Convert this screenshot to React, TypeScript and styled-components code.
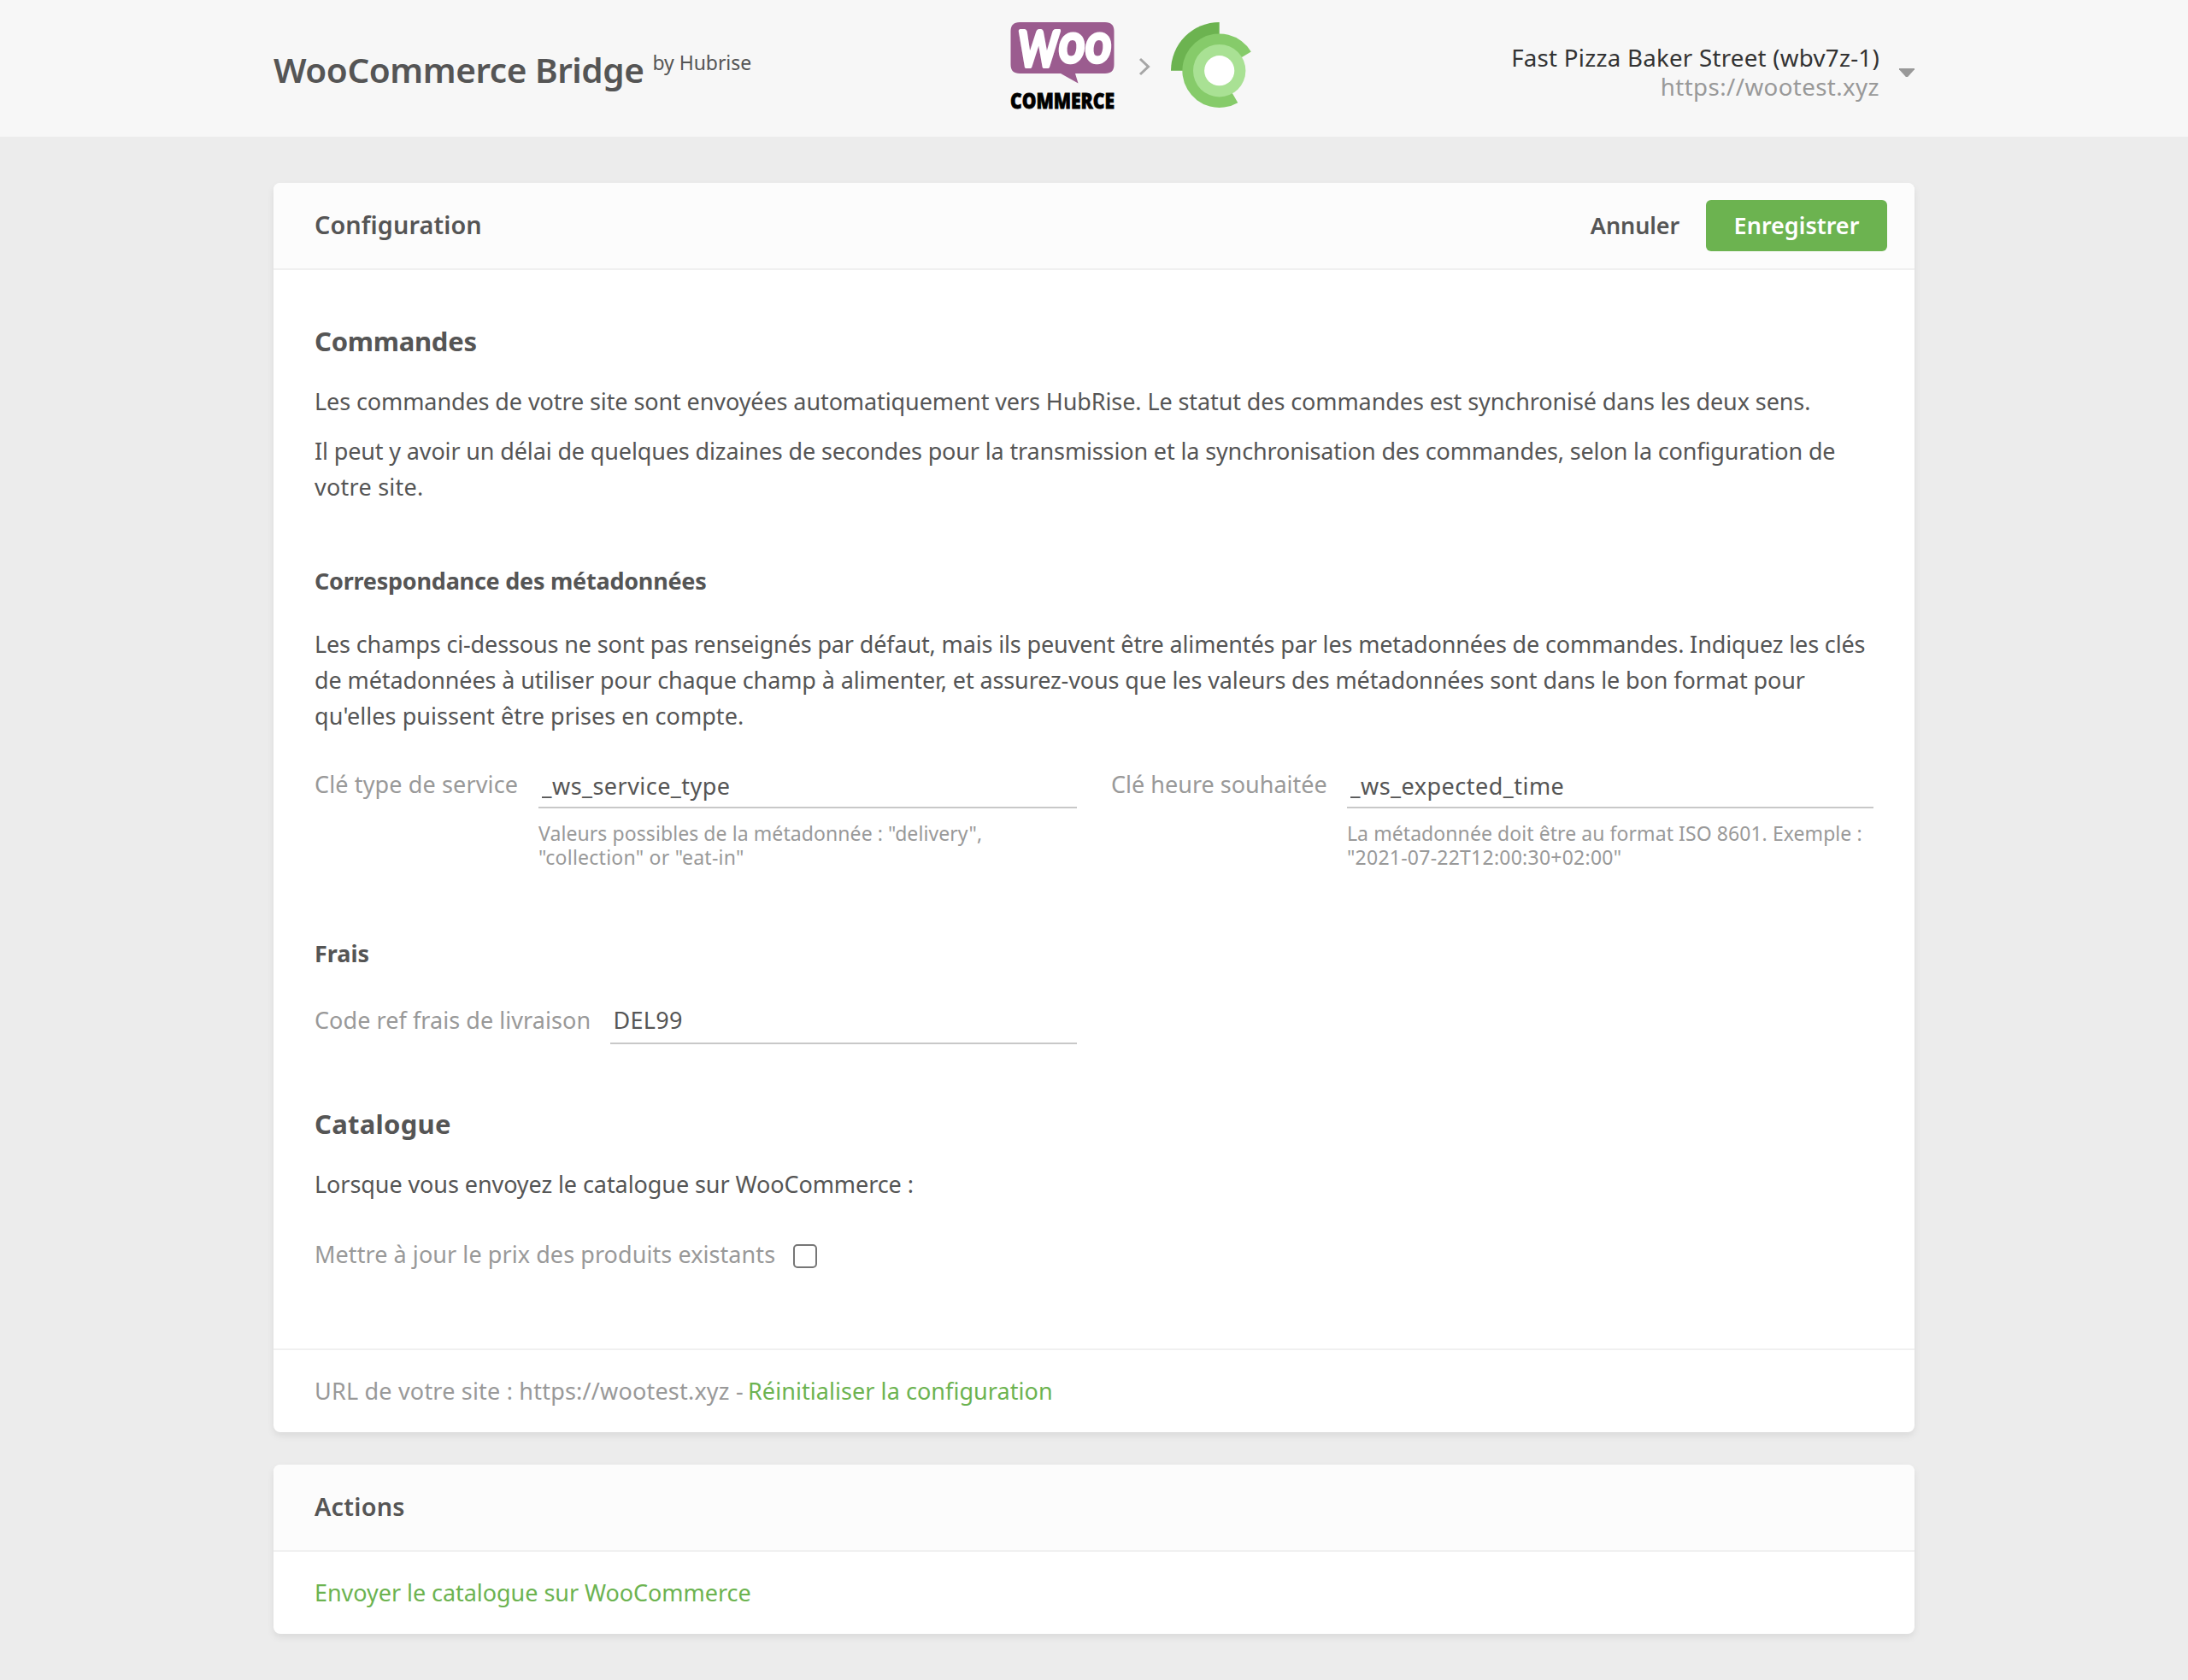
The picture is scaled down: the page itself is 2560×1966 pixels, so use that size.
import React from "react";
import styled, { createGlobalStyle } from "styled-components";

const GlobalStyle = createGlobalStyle`
  *, *::before, *::after { box-sizing: border-box; }
  html, body { margin: 0; padding: 0; }
  body {
    min-height: 1966px;
    background: #ececec;
    color: #555;
    font-family: "Noto Sans", "Open Sans", sans-serif;
    font-size: 27px;
    line-height: 42px;
  }
  h1, h2, h3, p { margin: 0; }
`;

type Tracked = { $track?: number };

const TopBar = styled.header`
  height: 160px;
  background: #f7f7f7;
`;

const TopBarInner = styled.div`
  width: 1920px;
  height: 160px;
  margin: 0 auto;
  display: flex;
  align-items: flex-start;
`;

const Brand = styled.div`
  width: 862px;
  padding-top: 52px;
  display: flex;
  align-items: flex-start;
  gap: 10px;
  white-space: nowrap;
`;

const BrandName = styled.h1<Tracked>`
  font-size: 40.5px;
  line-height: 60px;
  font-weight: 600;
  letter-spacing: ${(p) => p.$track ?? 0}px;
`;

const BrandBy = styled.span<Tracked>`
  padding-top: 6px;
  font-size: 23px;
  line-height: 30px;
  letter-spacing: ${(p) => p.$track ?? 0}px;
`;

const Logos = styled.div`
  padding-top: 26px;
  display: flex;
  align-items: flex-start;
`;

const WooSvg = styled.svg`
  display: block;
  width: 122px;
  height: 103px;
  overflow: visible;
`;

const ChevronSvg = styled.svg`
  display: block;
  width: 14px;
  height: 22px;
  margin: 41px 24px 0 28px;
`;

const HubriseSvg = styled.svg`
  display: block;
  width: 95px;
  height: 101px;
`;

const Account = styled.div`
  margin-left: auto;
  padding-top: 51px;
  display: flex;
  align-items: flex-start;
  gap: 23px;
`;

const AccountText = styled.div`
  text-align: right;
  font-size: 27.7px;
  line-height: 33.5px;
  white-space: nowrap;
`;

const AccountLine = styled.div<Tracked & { $muted?: boolean }>`
  color: ${(p) => (p.$muted ? "#999" : "#333")};
  letter-spacing: ${(p) => p.$track ?? 0}px;
`;

const Caret = styled.span`
  width: 18px;
  height: 10px;
  margin-top: 29px;
  background: #999;
  clip-path: polygon(0 0, 100% 0, 100% 12%, 56% 100%, 44% 100%, 0 12%);
`;

const Main = styled.main`
  width: 1920px;
  margin: 0 auto;
  padding: 54px 0;
  display: flex;
  flex-direction: column;
  gap: 38px;
`;

const Card = styled.section`
  background: #fff;
  border-radius: 8px;
  box-shadow: 0 4px 8px rgba(0, 0, 0, 0.08);
`;

const CardHeader = styled.div`
  height: 102px;
  padding: 0 32px 0 48px;
  display: flex;
  align-items: center;
  background: #fcfcfc;
  border-bottom: 2px solid #f0f0f0;
  border-radius: 8px 8px 0 0;
`;

const CardTitle = styled.h2<Tracked>`
  margin-right: auto;
  padding-bottom: 2px;
  font-size: 28.8px;
  font-weight: 600;
  letter-spacing: ${(p) => p.$track ?? 0}px;
`;

const Button = styled.button<Tracked & { $primary?: boolean }>`
  width: ${(p) => (p.$primary ? 212 : 166)}px;
  height: 60px;
  padding: 0;
  border: 0;
  border-radius: 6px;
  background: ${(p) => (p.$primary ? "#6cb350" : "transparent")};
  color: ${(p) => (p.$primary ? "#fff" : "#555")};
  font-family: inherit;
  font-size: 27px;
  font-weight: 600;
  line-height: 58px;
  letter-spacing: ${(p) => p.$track ?? 0}px;
`;

const CardBody = styled.div`
  padding: 62px 48px 89px;
`;

const SectionTitle = styled.h2<Tracked & { $top?: number }>`
  margin-top: ${(p) => p.$top ?? 0}px;
  font-size: 31px;
  font-weight: 700;
  letter-spacing: ${(p) => p.$track ?? 0}px;
`;

const SubTitle = styled.h3<Tracked & { $top: number }>`
  margin-top: ${(p) => p.$top}px;
  font-size: 27px;
  font-weight: 700;
  letter-spacing: ${(p) => p.$track ?? 0}px;
`;

const Paragraph = styled.p<{ $top: number }>`
  margin-top: ${(p) => p.$top}px;
`;

const Line = styled.span<Tracked>`
  display: block;
  white-space: nowrap;
  letter-spacing: ${(p) => p.$track ?? 0}px;
`;

const FieldRow = styled.div<{ $top: number }>`
  margin-top: ${(p) => p.$top}px;
  display: grid;
  grid-template-columns: 892px 892px;
  column-gap: 40px;
`;

const Field = styled.div<{ $label: number }>`
  display: grid;
  grid-template-columns: ${(p) => p.$label}px 1fr;
`;

const Label = styled.label<Tracked>`
  color: #999;
  white-space: nowrap;
  letter-spacing: ${(p) => p.$track ?? 0}px;
`;

const Input = styled.input<Tracked & { $lift?: number }>`
  display: block;
  width: 100%;
  height: 49px;
  padding: 0 4px ${(p) => 2 + (p.$lift ?? 0)}px 3.5px;
  border: 0;
  border-bottom: 2px solid #c8c8c8;
  border-radius: 0;
  outline: 0;
  background: transparent;
  color: #555;
  font-family: inherit;
  font-size: 27px;
  letter-spacing: ${(p) => p.$track ?? 0}px;
`;

const Help = styled.div`
  margin-top: 15px;
  color: #999;
  font-size: 23px;
  line-height: 28px;
`;

const CheckRow = styled.div`
  margin-top: 40px;
  display: flex;
  align-items: flex-start;
`;

const CheckLabelBox = styled.div`
  width: 560px;
`;

const Checkbox = styled.input.attrs({ type: "checkbox" })`
  appearance: none;
  width: 28px;
  height: 28px;
  margin: 9px 0 0;
  border: 2px solid #767676;
  border-radius: 5px;
  background: #fff;
`;

const CardFooter = styled.div<{ $line?: boolean }>`
  height: ${(p) => (p.$line ? 98 : 96)}px;
  padding: 0 48px;
  display: flex;
  align-items: center;
  border-top: ${(p) => (p.$line ? "2px solid #f0f0f0" : "0")};
  color: #999;
  white-space: nowrap;
`;

const FooterText = styled.span<Tracked>`
  width: 507px;
  letter-spacing: ${(p) => p.$track ?? 0}px;
`;

const Link = styled.a<Tracked>`
  color: #6cb350;
  text-decoration: none;
  letter-spacing: ${(p) => p.$track ?? 0}px;
`;

function WooLogo() {
  return (
    <WooSvg viewBox="0 0 122 103">
      <path
        d="M11 0H111Q121.500 0 121.500 10.500V49.500Q121.500 60 111 60H76L79.500 71.500L59 60H11Q.5 60 .5 49.500V10.500Q.5 0 11 0Z"
        fill="#9b5c8f"
      />
      <g
        fill="#fff"
        stroke="#fff"
        strokeLinejoin="round"
        fontFamily="Lato, sans-serif"
        fontWeight="700"
      >
        <text transform="translate(8 51.500) skewX(-4)" fontSize="58" strokeWidth="4" textLength="47" lengthAdjust="spacingAndGlyphs">W</text>
        <text transform="translate(55 46.500) skewX(-5)" fontSize="65" strokeWidth="3.500" textLength="31" lengthAdjust="spacingAndGlyphs">o</text>
        <text transform="translate(86 46.500) skewX(-5)" fontSize="65" strokeWidth="3.500" textLength="31" lengthAdjust="spacingAndGlyphs">o</text>
      </g>
      <text
        x="0"
        y="101"
        fontFamily="Open Sans, sans-serif"
        fontWeight="800"
        fontSize="25"
        fill="#000"
        stroke="#000"
        strokeWidth="0.800"
        textLength="122"
        lengthAdjust="spacingAndGlyphs"
      >
        COMMERCE
      </text>
    </WooSvg>
  );
}

function Chevron() {
  return (
    <ChevronSvg viewBox="0 0 14 22">
      <path d="M2 2L11.500 11L2 20" fill="none" stroke="#a6a6a6" strokeWidth="3" />
    </ChevronSvg>
  );
}

function HubriseLogo() {
  return (
    <HubriseSvg viewBox="0 0 95 101">
      <path d="M56.700 56.700H0A56.700 56.700 0 0 1 56.700 0Z" fill="#6cb350" />
      <path
        d="M56.700 56.700L93.800 34.400A43.300 43.300 0 1 0 78.300 94.200Z"
        fill="#86cb6a"
      />
      <circle cx="56.700" cy="56.700" r="30.700" fill="#a9e194" />
      <circle cx="56.700" cy="56.700" r="17.600" fill="#fff" />
    </HubriseSvg>
  );
}

export default function App() {
  return (
    <>
      <GlobalStyle />
      <TopBar>
        <TopBarInner>
          <Brand>
            <BrandName $track={-0.45}>WooCommerce Bridge</BrandName>
            <BrandBy $track={-0.05}>by Hubrise</BrandBy>
          </Brand>
          <Logos>
            <WooLogo />
            <Chevron />
            <HubriseLogo />
          </Logos>
          <Account>
            <AccountText>
              <AccountLine $track={0.25}>Fast Pizza Baker Street (wbv7z-1)</AccountLine>
              <AccountLine $muted $track={0.39}>https://wootest.xyz</AccountLine>
            </AccountText>
            <Caret />
          </Account>
        </TopBarInner>
      </TopBar>
      <Main>
        <Card>
          <CardHeader>
            <CardTitle $track={0.1}>Configuration</CardTitle>
            <Button $track={-0.1}>Annuler</Button>
            <Button $primary>Enregistrer</Button>
          </CardHeader>
          <CardBody>
            <SectionTitle $track={-0.27}>Commandes</SectionTitle>
            <Paragraph $top={29}>
              <Line $track={-0.098}>Les commandes de votre site sont envoyées automatiquement vers HubRise. Le statut des commandes est synchronisé dans les deux sens.</Line>
            </Paragraph>
            <Paragraph $top={16}>
              <Line $track={-0.139}>Il peut y avoir un délai de quelques dizaines de secondes pour la transmission et la synchronisation des commandes, selon la configuration de</Line>
              <Line $track={0.25}>votre site.</Line>
            </Paragraph>
            <SubTitle $top={68} $track={-0.24}>Correspondance des métadonnées</SubTitle>
            <Paragraph $top={32}>
              <Line $track={-0.14}>Les champs ci-dessous ne sont pas renseignés par défaut, mais ils peuvent être alimentés par les metadonnées de commandes. Indiquez les clés</Line>
              <Line $track={-0.11}>de métadonnées à utiliser pour chaque champ à alimenter, et assurez-vous que les valeurs des métadonnées sont dans le bon format pour</Line>
              <Line $track={0.06}>qu'elles puissent être prises en compte.</Line>
            </Paragraph>
            <FieldRow $top={38}>
              <Field $label={262}>
                <Label $track={0.13}>Clé type de service</Label>
                <div>
                  <Input $track={0.46} defaultValue="_ws_service_type" />
                  <Help>
                    <Line $track={0.08}>Valeurs possibles de la métadonnée : "delivery",</Line>
                    <Line $track={0.25}>"collection" or "eat-in"</Line>
                  </Help>
                </div>
              </Field>
              <Field $label={276}>
                <Label>Clé heure souhaitée</Label>
                <div>
                  <Input $track={0.48} defaultValue="_ws_expected_time" />
                  <Help>
                    <Line $track={0.07}>La métadonnée doit être au format ISO 8601. Exemple :</Line>
                    <Line $track={0.24}>"2021-07-22T12:00:30+02:00"</Line>
                  </Help>
                </div>
              </Field>
            </FieldRow>
            <SubTitle $top={78}>Frais</SubTitle>
            <FieldRow $top={36}>
              <Field $label={346}>
                <Label $track={0.06}>Code ref frais de livraison</Label>
                <Input $lift={5} $track={0.3} defaultValue="DEL99" />
              </Field>
            </FieldRow>
            <SectionTitle $top={72} $track={0.27}>Catalogue</SectionTitle>
            <Paragraph $top={29}>
              <Line $track={-0.08}>Lorsque vous envoyez le catalogue sur WooCommerce :</Line>
            </Paragraph>
            <CheckRow>
              <CheckLabelBox>
                <Label $track={0.07}>Mettre à jour le prix des produits existants</Label>
              </CheckLabelBox>
              <Checkbox />
            </CheckRow>
          </CardBody>
          <CardFooter $line>
            <FooterText $track={0.2}>URL de votre site : https://wootest.xyz -</FooterText>
            <Link $track={0.06}>Réinitialiser la configuration</Link>
          </CardFooter>
        </Card>
        <Card>
          <CardHeader>
            <CardTitle $track={0.25}>Actions</CardTitle>
          </CardHeader>
          <CardFooter>
            <Link $track={-0.05}>Envoyer le catalogue sur WooCommerce</Link>
          </CardFooter>
        </Card>
      </Main>
    </>
  );
}
